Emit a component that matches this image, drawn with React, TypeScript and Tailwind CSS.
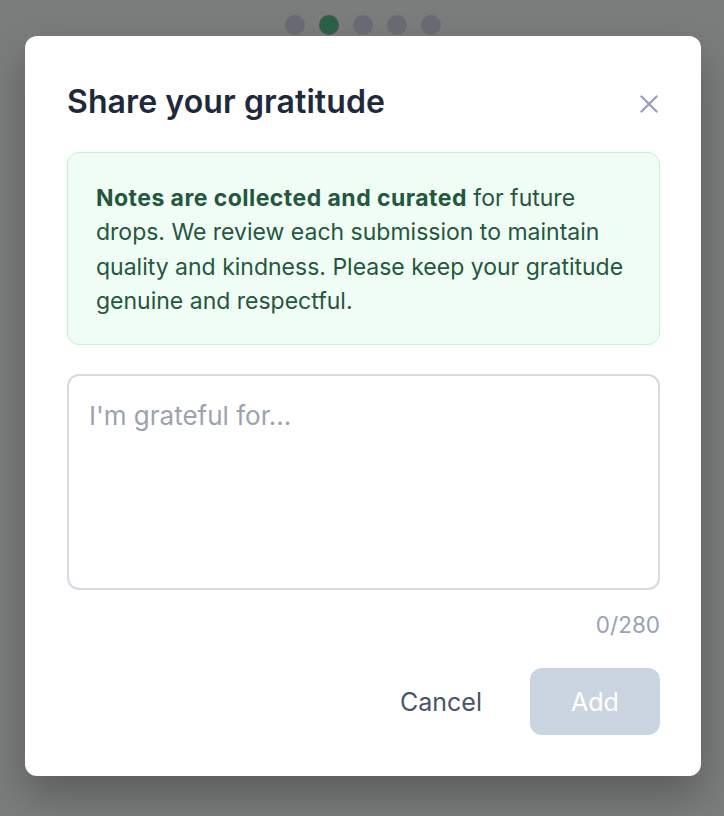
import React from "react";

export default function App() {
  return (
    <div
      className="relative h-[816px] w-full overflow-hidden bg-[#7a7d7c]"
      style={{ fontFamily: "Inter, 'Noto Sans', sans-serif" }}
    >
      <div className="flex justify-center gap-[14px] pt-[15px] pl-[2px]">
        <span className="h-5 w-5 rounded-full bg-[#676a72]" />
        <span className="h-5 w-5 rounded-full bg-[#2b6044]" />
        <span className="h-5 w-5 rounded-full bg-[#676a72]" />
        <span className="h-5 w-5 rounded-full bg-[#676a72]" />
        <span className="h-5 w-5 rounded-full bg-[#676a72]" />
      </div>
      <div className="ml-[25px] mt-[1px] flex h-[740px] w-[676px] flex-col rounded-[12px] bg-white pl-[42px] pr-[41px] pt-[48px] pb-[41px] shadow-[0_20px_40px_rgba(0,0,0,0.25)]">
        <div className="flex items-center justify-between">
          <h2 className="text-[32px] leading-[36px] font-semibold tracking-[0.003em] text-[#1e293b]">
            Share your gratitude
          </h2>
          <button className="mr-[2px] pt-[4px] text-[#94a3b8]" aria-label="Close">
            <svg width="18" height="18" viewBox="0 0 18 18" fill="none" stroke="currentColor" strokeWidth="2.4" strokeLinecap="round">
              <path d="M1.5 1.5L16.5 16.5M16.5 1.5L1.5 16.5" />
            </svg>
          </button>
        </div>
        <div className="mt-[32px] rounded-[12px] border border-[#bbf7d0] bg-[#f0fdf4] px-[28px] pt-[28px] pb-[26px] text-[23px] leading-[34.3px] text-[#24573e]">
          <span className="font-bold tracking-[0.02em]">Notes are collected and curated</span> for future
          <br />
          drops. We review each submission to maintain
          <br />
          quality and kindness. Please keep your gratitude
          <br />
          genuine and respectful.
        </div>
        <div className="mt-[29px] h-[216px] rounded-[12px] border-2 border-[#d5dbe3] px-[20px] pt-[24px] pb-[20px]">
          <div className="text-[26px] leading-[32px] text-[#9ca3af]">I'm grateful for...</div>
        </div>
        <div className="mt-[21px] text-right text-[22.5px] leading-[28px] text-[#94a3b8]">0/280</div>
        <div className="mt-auto flex items-center justify-end gap-[48px]">
          <button className="pt-[2px] text-[25px] text-[#475569]">Cancel</button>
          <button className="h-[67px] w-[130px] rounded-[12px] bg-[#cbd5e1] pt-[2px] text-[25px] text-white">Add</button>
        </div>
      </div>
    </div>
  );
}
